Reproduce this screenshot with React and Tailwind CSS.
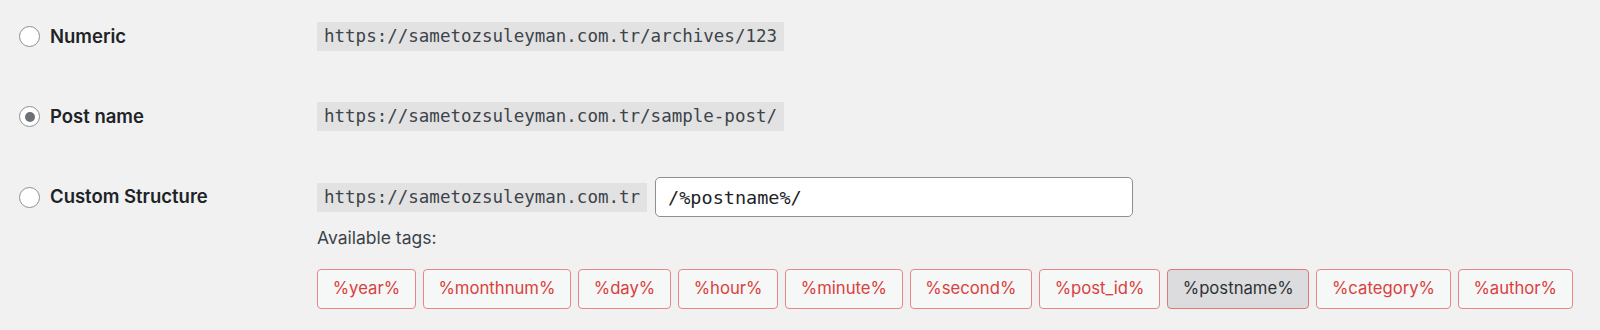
const TAGS = [
  '%year%',
  '%monthnum%',
  '%day%',
  '%hour%',
  '%minute%',
  '%second%',
  '%post_id%',
  '%postname%',
  '%category%',
  '%author%',
];

const SANS = 'font-["Inter","Liberation_Sans",sans-serif]';
const MONO = 'font-["DejaVu_Sans_Mono","Liberation_Mono",monospace]';

function Radio({ checked }) {
  return (
    <span className="w-[21px] h-[21px] shrink-0 rounded-full border border-[#8c8f94] bg-white flex items-center justify-center">
      {checked && <span className="w-[10px] h-[10px] rounded-full bg-[#6c7177]" />}
    </span>
  );
}

function Label({ checked, children }) {
  return (
    <div className="w-[298px] shrink-0 flex items-center gap-[10px]">
      <Radio checked={checked} />
      <span className="text-[18.5px] font-semibold text-[#1d2327]">{children}</span>
    </div>
  );
}

function Code({ children }) {
  return (
    <code className={`${MONO} bg-[#e2e2e2] text-[#3c434a] text-[17.5px] leading-[29px] h-[29px] px-[7px] whitespace-nowrap`}>
      {children}
    </code>
  );
}

export default function App() {
  return (
    <div className={`${SANS} bg-[#f1f1f1] w-[1600px] h-[330px] overflow-hidden pl-[19px] pt-[22px]`}>
      <div className="flex items-center h-[29px]">
        <Label>Numeric</Label>
        <Code>https://sametozsuleyman.com.tr/archives/123</Code>
      </div>

      <div className="flex items-center h-[29px] mt-[51px]">
        <Label checked>Post name</Label>
        <Code>https://sametozsuleyman.com.tr/sample-post/</Code>
      </div>

      <div className="flex mt-[46px]">
        <div className="h-[40px] flex items-center">
          <Label>Custom Structure</Label>
        </div>
        <div className="flex flex-col">
          <div className="flex items-center gap-[8px] h-[40px]">
            <Code>https://sametozsuleyman.com.tr</Code>
            <input
              readOnly
              value="/%postname%/"
              className={`${MONO} w-[478px] h-[40px] rounded-[5px] border border-[#8c8f94] bg-white px-[12px] text-[18.5px] text-[#1d2327] outline-none`}
            />
          </div>
          <div className="mt-[8px] text-[17.5px] leading-[26px] text-[#3c434a]">Available tags:</div>
          <div className="flex gap-[7px] mt-[18px]">
            {TAGS.map((t) => {
              const active = t === '%postname%';
              return (
                <button
                  key={t}
                  className={
                    active
                      ? 'h-[40px] px-[14.7px] rounded-[4px] border border-[#e27878] bg-[#dcdcde] text-[#2c3338] text-[16.7px] whitespace-nowrap'
                      : 'h-[40px] px-[14.7px] rounded-[4px] border border-[#e78886] bg-[#f6f7f7] text-[#d9413e] text-[16.7px] whitespace-nowrap'
                  }
                >
                  {t}
                </button>
              );
            })}
          </div>
        </div>
      </div>
    </div>
  );
}
